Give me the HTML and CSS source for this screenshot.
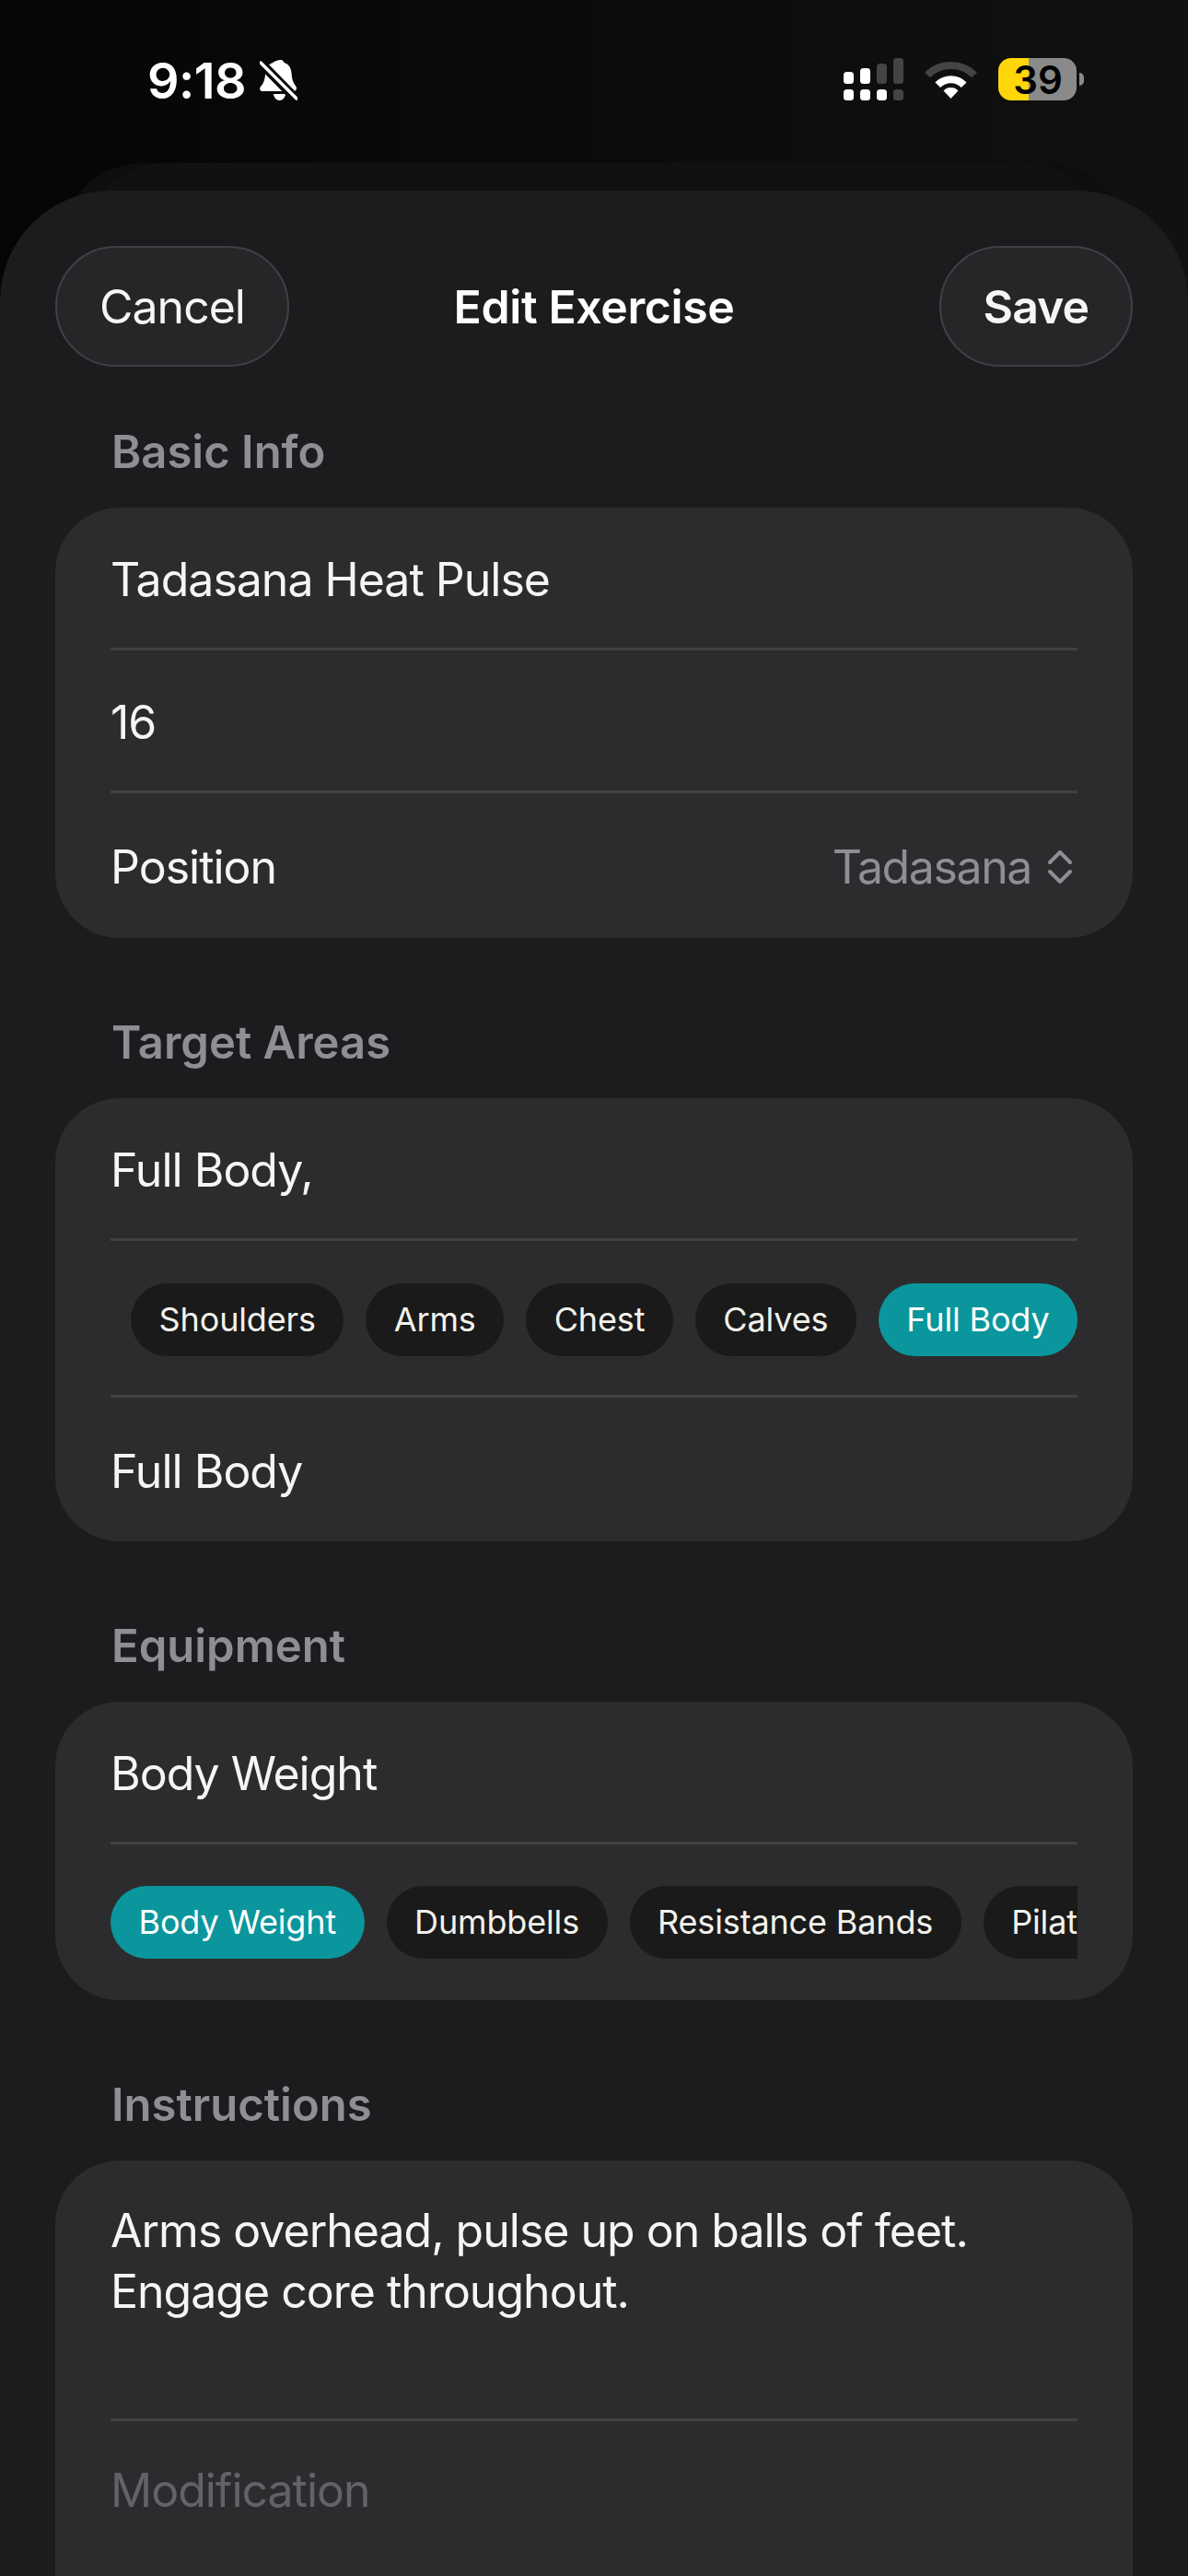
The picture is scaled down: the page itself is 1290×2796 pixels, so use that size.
FILE: index.html
```html
<!DOCTYPE html>
<html>
<head>
  <title>Edit Exercise</title>
  <link rel="stylesheet" href="styles.css">
</head>
<body>
  <div class="status-bar">
    <div class="status-left">
      <span class="time">9:18</span>
      <svg class="bell" width="41" height="44" viewBox="0 0 41 44">
        <path d="M23 0c2 0 3 1.500 3.500 3 5 1.500 7.500 5.500 8 11 .5 6 1 9.500 5 15 1 1.500 .5 5-2.500 5H3c-3 0-3.500-3.500-2-5 3.500-3.500 4.500-8 5-13 .5-7 3-11.500 8.500-13C15 1.500 21 0 23 0z" fill="#fff"/>
        <path d="M15 37h13c-.5 4-3 7-6.500 7S15.500 41 15 37z" fill="#fff"/>
        <path d="M0 2L41 44" stroke="#0a0a0a" stroke-width="10"/>
        <path d="M1 3L40 42" stroke="#fff" stroke-width="3.500" stroke-linecap="round"/>
      </svg>
    </div>
    <div class="status-right">
      <svg width="65" height="46" viewBox="0 0 65 46">
        <rect x="0" y="15" width="11" height="13" rx="3.500" fill="#fff"/>
        <rect x="18" y="11" width="11" height="17" rx="3.500" fill="#fff"/>
        <rect x="36" y="6" width="11" height="22" rx="3.500" fill="#444"/>
        <rect x="54" y="0" width="11" height="28" rx="3.500" fill="#444"/>
        <rect x="0" y="34" width="11" height="12" rx="3.500" fill="#fff"/>
        <rect x="18" y="34" width="11" height="12" rx="3.500" fill="#fff"/>
        <rect x="36" y="34" width="11" height="12" rx="3.500" fill="#fff"/>
        <rect x="54" y="34" width="11" height="12" rx="3.500" fill="#444"/>
      </svg>
      <svg class="wifi" width="57" height="41" viewBox="0 0 57 41">
        <path d="M3 15.500A36 36 0 0 1 54 15.500" fill="none" stroke="#444" stroke-width="8"/>
        <path d="M14.300 26.200A20 20 0 0 1 42.700 26.200" fill="none" stroke="#fff" stroke-width="8"/>
        <path d="M20.500 32.500A11 11 0 0 1 36.500 32.500L28.500 41z" fill="#fff"/>
      </svg>
      <div class="battery">
        <div class="battery-body"><span class="battery-level">39</span></div>
        <div class="battery-cap"></div>
      </div>
    </div>
  </div>

  <div class="back-card"></div>
  <div class="back-card inner"></div>

  <div class="sheet">
    <div class="nav">
      <div class="nav-btn">Cancel</div>
      <div class="nav-title">Edit Exercise</div>
      <div class="nav-btn save">Save</div>
    </div>

    <div class="section-label">Basic Info</div>
    <div class="card">
      <div class="row">Tadasana Heat Pulse</div>
      <div class="row">16</div>
      <div class="row last split tall">
        <span>Position</span>
        <span class="picker">Tadasana
          <svg width="26" height="36" viewBox="0 0 26 36">
            <path d="M2 13L13 2L24 13M2 23L13 34L24 23" fill="none" stroke="#8e8e93" stroke-width="4" stroke-linecap="round" stroke-linejoin="round"/>
          </svg>
        </span>
      </div>
    </div>

    <div class="section-label">Target Areas</div>
    <div class="card">
      <div class="row">Full Body,</div>
      <div class="row chips end">
        <span class="chip">Shoulders</span>
        <span class="chip">Arms</span>
        <span class="chip">Chest</span>
        <span class="chip">Calves</span>
        <span class="chip on">Full Body</span>
      </div>
      <div class="row last">Full Body</div>
    </div>

    <div class="section-label">Equipment</div>
    <div class="card">
      <div class="row">Body Weight</div>
      <div class="row chips last">
        <span class="chip on">Body Weight</span>
        <span class="chip">Dumbbells</span>
        <span class="chip">Resistance Bands</span>
        <span class="chip">Pilates</span>
      </div>
    </div>

    <div class="section-label">Instructions</div>
    <div class="card open">
      <div class="row notes">Arms overhead, pulse up on balls of feet.<br>Engage core throughout.</div>
      <div class="row last placeholder">Modification</div>
    </div>
  </div>
</body>
</html>
```

FILE: styles.css
```css
html, body {
  margin: 0;
  height: 2796px;
  overflow: hidden;
}

body {
  position: relative;
  background: linear-gradient(90deg, #050505, #111112);
  font-family: Inter, "Liberation Sans", sans-serif;
  color: #fff;
}

/* status bar */
.status-bar {
  display: flex;
  justify-content: space-between;
  height: 177px;
  padding: 63px 113px 0 160px;
  box-sizing: border-box;
}

.status-left {
  display: flex;
  align-items: flex-start;
  gap: 15px;
}

.time {
  font-size: 54px;
  font-weight: 600;
  line-height: 50px;
  letter-spacing: -0.5px;
}

.bell {
  margin-top: 2px;
}

.status-right {
  display: flex;
  align-items: flex-start;
  gap: 23px;
}

.wifi {
  margin-top: 3px;
}

.battery {
  display: flex;
  align-items: center;
  gap: 3px;
  height: 46px;
}

.battery-body {
  width: 85px;
  height: 46px;
  border-radius: 14px;
  background: linear-gradient(90deg, #ffd60a 39%, #8a8a8a 39%);
  display: flex;
  align-items: center;
  justify-content: center;
}

.battery-level {
  font-size: 42px;
  font-weight: 600;
  color: #000;
  padding-left: 1px;
}

.battery-cap {
  width: 5px;
  height: 14px;
  border-radius: 0 5px 5px 0;
  background: #8a8a8a;
}

/* cards peeking out behind the sheet */
.back-card {
  position: absolute;
  top: 177px;
  left: 65px;
  right: 65px;
  height: 200px;
  border-radius: 90px 90px 0 0;
  background: #0e0e0f;
}

.back-card.inner {
  left: 90px;
  right: 90px;
  background: #111112;
}

/* sheet */
.sheet {
  position: relative;
  margin-top: 30px;
  padding: 60px 60px 0;
  height: 2589px;
  border-radius: 120px 120px 0 0;
  background: #1c1c1e;
}

.nav {
  display: flex;
  align-items: center;
  justify-content: space-between;
  position: relative;
  margin-bottom: 65px;
}

.nav-btn {
  box-sizing: border-box;
  height: 131px;
  line-height: 129px;
  padding: 0 46px;
  font-size: 50px;
  letter-spacing: -1px;
  border: 2px solid #414145;
  border-radius: 66px;
  background: #262628;
  color: #f5f5f5;
}

.nav-btn.save {
  font-weight: 600;
}

.nav-title {
  position: absolute;
  left: 0;
  right: 0;
  text-align: center;
  font-size: 50px;
  font-weight: 600;
  letter-spacing: -0.4px;
}

.section-label {
  height: 56px;
  line-height: 56px;
  margin: 0 0 32px 61px;
  font-size: 49px;
  font-weight: 600;
  color: #8e8e93;
}

.card {
  margin-bottom: 86px;
  border-radius: 70px;
  background: #2c2c2e;
}

.card.open {
  border-radius: 70px 70px 0 0;
  padding-bottom: 60px;
}

.row {
  box-sizing: border-box;
  height: 155px;
  padding-top: 3px;
  margin: 0 60px;
  display: flex;
  align-items: center;
  font-size: 50px;
  letter-spacing: -1px;
  color: #f5f5f5;
  border-bottom: 3px solid #414143;
}

.row.last {
  height: 156px;
  border-bottom: none;
}

.row.tall {
  height: 157px;
}

.split {
  justify-content: space-between;
}

.picker {
  display: flex;
  align-items: center;
  gap: 18px;
  padding-right: 6px;
  letter-spacing: -1.4px;
  color: #8e8e93;
}

.row.chips {
  height: 170px;
  gap: 24px;
  overflow: hidden;
  letter-spacing: -0.15px;
}

.row.chips.last {
  height: 169px;
  padding-top: 0;
}

.chips.end {
  justify-content: flex-end;
}

.chip {
  flex: none;
  height: 79px;
  line-height: 79px;
  padding: 0 30.5px;
  border-radius: 40px;
  background: #1a1a1a;
  font-size: 36px;
  color: #f2f2ec;
}

.chip.on {
  background: #0a969c;
  color: #fff;
}

.row.notes {
  display: block;
  height: 283px;
  padding-top: 43px;
  line-height: 66px;
}

.row.placeholder {
  height: 150px;
  padding-top: 0;
  color: #636367;
}
```
